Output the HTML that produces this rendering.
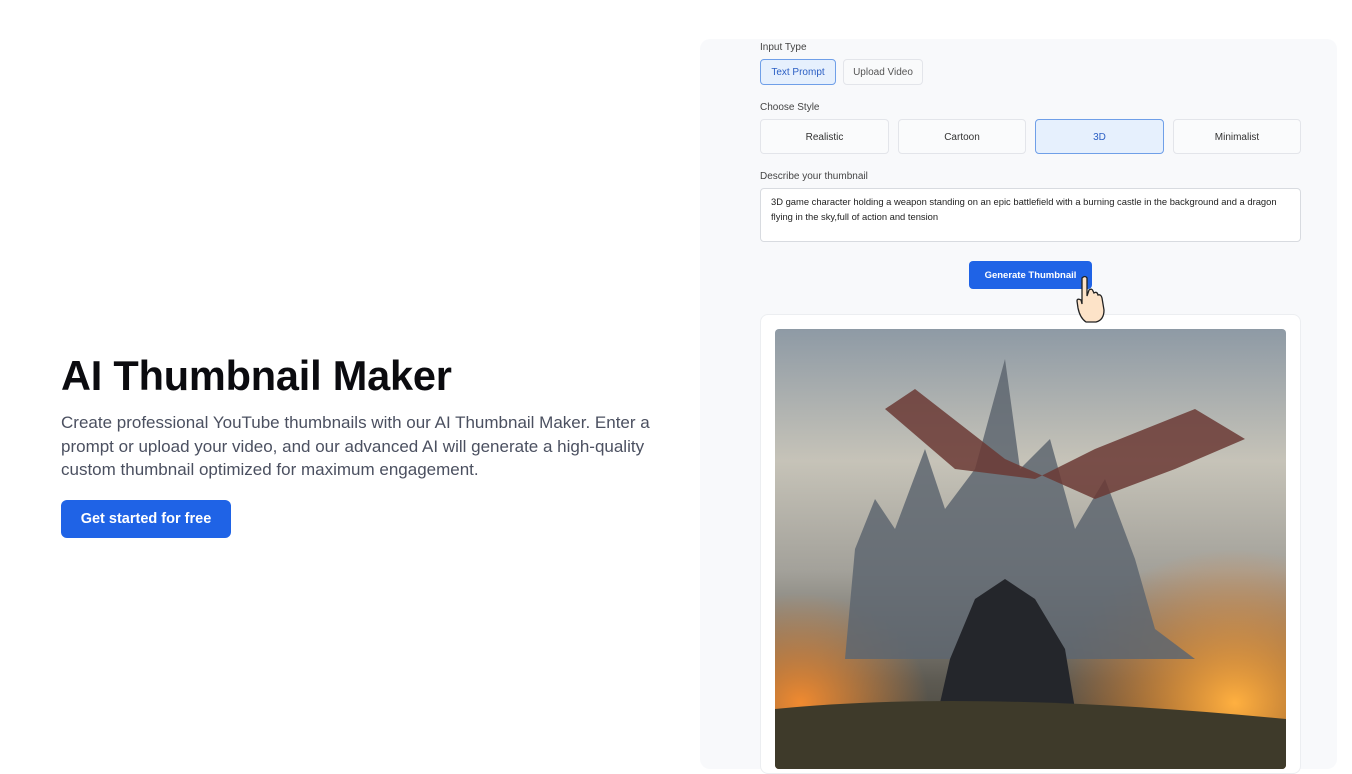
<!DOCTYPE html>
<html><head><meta charset="utf-8"><style>
*{box-sizing:border-box;margin:0;padding:0}
body{width:1352px;height:760px;overflow:hidden;background:#fff;font-family:"Liberation Sans",sans-serif;position:relative}
h1{position:absolute;left:61px;top:352px;font-size:41.5px;font-weight:700;color:#0b0b0f;letter-spacing:-0.2px}
.p{position:absolute;left:61px;top:411px;width:620px;font-size:17px;line-height:23.5px;color:#4b5060}
.cta{position:absolute;left:61px;top:500px;width:170px;height:38px;background:#1f63e6;color:#fff;border-radius:6px;font-size:14.5px;font-weight:700;display:flex;align-items:center;justify-content:center}
.panel{position:absolute;left:700px;top:39px;width:637px;height:730px;background:#f8f9fb;border-radius:10px}
.lbl{position:absolute;font-size:10px;color:#444}
.btn{position:absolute;border:1px solid #e3e5ea;background:#f9fafb;border-radius:4px;font-size:10px;color:#333;display:flex;align-items:center;justify-content:center;padding-top:1px}
.sel{background:#e6f0fd;border:1px solid #6f9fe8;color:#2b5fc4}
.ta{position:absolute;left:760px;top:188px;width:541px;height:54px;border:1px solid #d8dbe0;background:#fff;border-radius:4px;font-size:9.4px;line-height:15px;color:#222;padding:5px 10px}
.gen{position:absolute;left:969px;top:261px;width:123px;height:28px;background:#1f63e6;color:#fff;border-radius:4px;font-size:9.5px;font-weight:700;display:flex;align-items:center;justify-content:center}
.card{position:absolute;left:760px;top:314px;width:541px;height:460px;background:#fff;border:1px solid #eceef1;border-radius:8px}
.img{position:absolute;left:775px;top:329px;width:511px;height:440px;border-radius:4px;overflow:hidden;
background:linear-gradient(180deg,#8e9aa5 0%,#c6c3b8 30%,#a3a19a 55%,#5d5a52 80%,#3c3a30 100%)}
</style></head><body>
<h1>AI Thumbnail Maker</h1>
<div class="p">Create professional YouTube thumbnails with our AI Thumbnail Maker. Enter a prompt or upload your video, and our advanced AI will generate a high-quality custom thumbnail optimized for maximum engagement.</div>
<div class="cta">Get started for free</div>
<div class="panel"></div>
<div class="lbl" style="left:760px;top:42px">Input Type</div>
<div class="btn sel" style="left:760px;top:59px;width:76px;height:26px">Text Prompt</div>
<div class="btn" style="left:843px;top:59px;width:80px;height:26px;color:#555">Upload Video</div>
<div class="lbl" style="left:760px;top:102px">Choose Style</div>
<div class="btn" style="left:760px;top:119px;width:129px;height:35px;background:#fafbfc">Realistic</div>
<div class="btn" style="left:898px;top:119px;width:128px;height:35px;background:#fafbfc">Cartoon</div>
<div class="btn sel" style="left:1035px;top:119px;width:129px;height:35px">3D</div>
<div class="btn" style="left:1173px;top:119px;width:128px;height:35px;background:#fafbfc">Minimalist</div>
<div class="lbl" style="left:760px;top:171px">Describe your thumbnail</div>
<div class="ta">3D game character holding a weapon standing on an epic battlefield with a burning castle in the background and a dragon flying in the sky,full of action and tension</div>
<div class="gen">Generate Thumbnail</div>
<div class="card"></div>
<div class="img">
<svg width="511" height="440" viewBox="0 0 511 440" style="position:absolute;left:0;top:0">
<defs><radialGradient id="f" cx="0.9" cy="0.85" r="0.35"><stop offset="0" stop-color="#ffb040"/><stop offset="1" stop-color="#ff7a10" stop-opacity="0"/></radialGradient>
<radialGradient id="f2" cx="0.05" cy="0.85" r="0.25"><stop offset="0" stop-color="#f08a30"/><stop offset="1" stop-color="#f08a30" stop-opacity="0"/></radialGradient></defs>
<rect width="511" height="440" fill="url(#f)"/><rect width="511" height="440" fill="url(#f2)"/>
<path d="M70 330 L80 220 L100 170 L120 200 L150 120 L170 180 L200 140 L230 30 L245 140 L275 110 L300 200 L330 150 L360 230 L380 300 L420 330 Z" fill="#5e6670" opacity="0.85"/>
<path d="M230 130 L140 60 L110 80 L180 140 L260 150 L320 120 L420 80 L470 110 L400 140 L320 170 Z" fill="#6b3a35" opacity="0.85"/>
<path d="M150 440 L175 330 L200 270 L230 250 L260 270 L290 320 L310 440 Z" fill="#24262b"/>
<path d="M0 380 Q200 360 511 390 L511 440 L0 440 Z" fill="#3e3a2a"/>
</svg></div>
<svg style="position:absolute;left:1074px;top:274px" width="34" height="50" viewBox="0 0 34 50"><path d="M8 4 Q11 1 13 4 L13 22 L15 16 Q18 14 19 17 L20 19 Q23 17 24 21 Q27 20 28 24 L30 36 Q30 46 22 48 L12 48 Q6 44 4 34 L3 27 Q3 24 7 26 L8 30 Z" fill="#fde3c8" stroke="#222" stroke-width="1.3"/></svg>
</body></html>
